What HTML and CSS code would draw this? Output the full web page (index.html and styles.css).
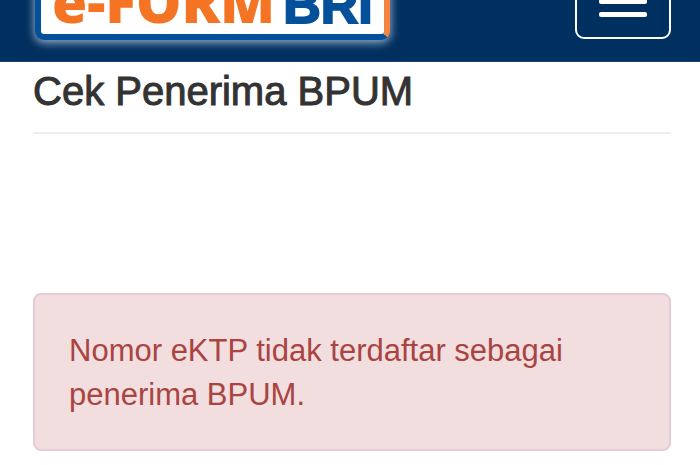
FILE: index.html
```html
<!DOCTYPE html>
<html lang="id">
<head>
  <meta charset="UTF-8" />
  <meta name="viewport" content="width=device-width, initial-scale=1" />
  <title>e-FORM BRI - Cek Penerima BPUM</title>
  <link rel="stylesheet" href="styles.css">
</head>
<body>
  <header class="navbar">
    <a class="brand" href="#"><span class="brand-form">e-FORM</span><span class="brand-bri">BRI</span></a>
    <button class="navbar-toggle" type="button" aria-label="Menu">
      <span class="icon-bar"></span>
      <span class="icon-bar"></span>
      <span class="icon-bar"></span>
    </button>
  </header>

  <main class="container">
    <h1>Cek Penerima BPUM</h1>
    <div class="alert" role="alert">Nomor eKTP tidak terdaftar sebagai penerima BPUM.</div>
  </main>
</body>
</html>
```
FILE: styles.css
```css
* {
  margin: 0;
  padding: 0;
  box-sizing: border-box;
}

body {
  background: #fff;
  font-family: "Helvetica Neue", "Liberation Sans", Arial, sans-serif;
  color: #333;
}

/* Navbar, partly scrolled out of view */
.navbar {
  display: flex;
  align-items: center;
  justify-content: space-between;
  margin-top: -58px;
  padding: 21px 29px 21px 35px;
  background: #00305f;
  border-bottom: 1px solid #1d3e70;
}

.brand {
  display: flex;
  align-items: baseline;
  padding: 4px 11px 0;
  background: #fff;
  border: 6px solid #04509a;
  border-right-color: #f58442;
  border-radius: 9px;
  box-shadow: 0 2px 8px 1px #8fa9c4;
  font-weight: bold;
  line-height: 57px;
  text-decoration: none;
}

.brand-form {
  font-family: "Open Sans", sans-serif;
  font-size: 57px;
  font-weight: 800;
  color: #f47424;
}

.brand-bri {
  margin-left: 8px;
  font-size: 52px;
  color: #04509a;
  -webkit-text-stroke: 2px #04509a;
}

.navbar-toggle {
  display: flex;
  flex-direction: column;
  gap: 8px;
  padding: 20px 22px;
  background: transparent;
  border: 2px solid #fff;
  border-radius: 9px;
  cursor: pointer;
}

.icon-bar {
  width: 48px;
  height: 5px;
  background: #fff;
  border-radius: 2px;
}

/* Content */
.container {
  padding: 0 29px 14px 33px;
}

h1 {
  margin-bottom: 159px;
  padding: 6px 0 18px;
  border-bottom: 2px solid #eee;
  font-size: 40px;
  font-weight: normal;
  line-height: 46px;
  -webkit-text-stroke: 1px #333;
}

.alert {
  padding: 34px 34px 32px;
  background: #f2dede;
  border: 2px solid #e6cbd4;
  border-radius: 8px;
  font-size: 31px;
  line-height: 44px;
  color: #a94442;
}
```
